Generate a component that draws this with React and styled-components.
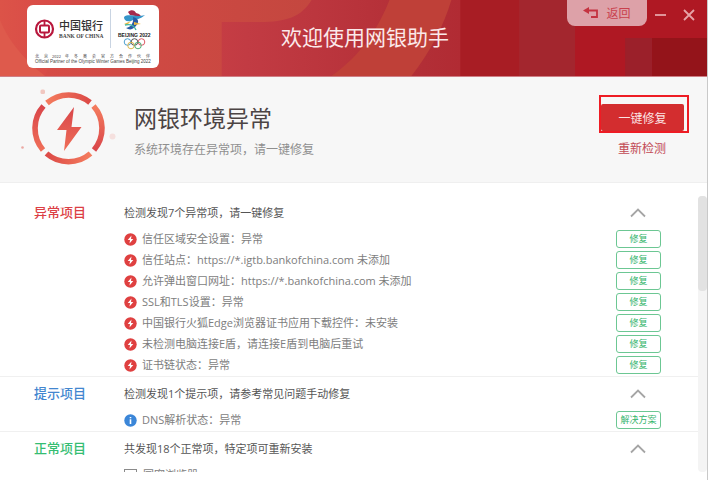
import React from "react";
import styled, { createGlobalStyle } from "styled-components";

const sans = `"Open Sans", "Noto Sans CJK SC", sans-serif`;

const GlobalStyle = createGlobalStyle`
  * { box-sizing: border-box; }
  body { margin: 0; background: #fff; font-family: ${sans}; }
  button { font-family: inherit; padding: 0; border: 0; background: none; cursor: pointer; }
  h1, h2, h3, p, ul { margin: 0; padding: 0; font-weight: 400; }
  ul { list-style: none; }
  svg { display: block; }
`;

const Window = styled.div`
  height: 100vh;
  display: flex;
  flex-direction: column;
  overflow: hidden;
  border-right: 1px solid #c9c9c9;
`;

const Header = styled.header`
  position: relative;
  flex: none;
  height: 77px;
  display: grid;
  grid-template-columns: 1fr auto 1fr;
  padding-left: 23px;
  color: #fff;
  border-bottom: 1px solid #cf7f86;
`;

const Backdrop = styled.svg`
  position: absolute;
  inset: 0;
  width: 100%;
  height: 100%;
`;

const LogoCard = styled.div`
  position: relative;
  align-self: start;
  justify-self: start;
  width: 132px;
  margin: 5px 0 0 4px;
  background: #fff;
  border-radius: 6px;
`;

const Title = styled.h1`
  position: relative;
  font-size: 21px;
  line-height: 30px;
  margin-top: 22px;
  color: #fbe9ea;
`;

const WindowControls = styled.div`
  position: relative;
  display: flex;
  align-items: flex-start;
  justify-content: flex-end;
  padding-right: 12px;
`;

const BackButton = styled.button`
  height: 26px;
  width: 80px;
  display: flex;
  align-items: center;
  justify-content: center;
  gap: 7px;
  color: #c9404c;
  background: #dda1a8;
  border-radius: 0 0 8px 8px;
  font-size: 12px;
`;

const IconButton = styled.button`
  width: 13px;
  height: 30px;
  display: grid;
  place-items: center;
  margin-left: ${(p) => (p.$first ? 7 : 15)}px;
`;

const Summary = styled.section`
  flex: none;
  height: 106px;
  display: flex;
  align-items: flex-start;
  background: #f7f7f7;
  border-bottom: 1px solid #efefef;
  padding: 0 18px 0 20px;
`;

const SummaryText = styled.div`
  flex: 1;
  padding: 25px 0 0 16px;
`;

const SummaryTitle = styled.h2`
  font-size: 23px;
  line-height: 32px;
  color: #4c4444;
`;

const SummaryNote = styled.p`
  font-size: 12px;
  line-height: 18px;
  margin-top: 7px;
  color: #8f8f8f;
`;

const SummaryActions = styled.div`
  display: flex;
  flex-direction: column;
  align-items: center;
  padding-top: 18px;
  gap: 7px;
`;

const Highlight = styled.div`
  width: 90px;
  height: 38px;
  border: 2px solid #ee1c24;
  padding: 7px 3px 0 0;
`;

const RepairAllButton = styled.button`
  width: 100%;
  height: 100%;
  background: #d32d2f;
  color: #fbe3e3;
  font-size: 12px;
  border-radius: 2px;
`;

const RecheckButton = styled.button`
  width: 100%;
  padding-right: 4px;
  font-size: 12px;
  line-height: 18px;
  color: #c24a55;
`;

const Results = styled.main`
  flex: 1;
  min-height: 0;
  display: flex;
  margin-bottom: 8px;
  padding-top: 13px;
`;

const Groups = styled.div`
  flex: 1;
  min-width: 0;
  overflow: hidden;
`;

const ScrollTrack = styled.div`
  width: 9px;
  background: #f4f4f4;
  border-radius: 4px;
`;

const ScrollThumb = styled.div`
  height: 95px;
  background: #e2e2e2;
  border-radius: 4px;
`;

const Group = styled.section`
  display: grid;
  grid-template-columns: 90px 1fr;
  padding: ${(p) => (p.$first ? 6 : 7)}px 37px 0 34px;
  border-top: 1px solid ${(p) => (p.$first ? "transparent" : "#f0f0f0")};
`;

const GroupName = styled.h3`
  font-size: 13px;
  line-height: 18px;
  font-weight: 500;
  color: ${(p) => p.$color};
`;

const GroupHead = styled.div`
  display: flex;
  align-items: center;
  justify-content: space-between;
  height: 20px;
`;

const GroupSummary = styled.p`
  font-size: 11px;
  line-height: 18px;
  color: #555;
`;

const Toggle = styled.button`
  width: 46px;
  height: 18px;
  display: grid;
  place-items: center;
`;

const Items = styled.ul`
  display: grid;
  gap: 3px;
  padding: 7px 0 2px;
`;

const Item = styled.li`
  display: flex;
  align-items: center;
  height: 18px;
  font-size: 11px;
  line-height: 18px;
  color: #7d7d7d;
  white-space: nowrap;
`;

const ItemText = styled.span`
  flex: 1;
  padding-left: 5px;
`;

const ActionButton = styled.button`
  width: 45px;
  height: 18px;
  border: 1px solid #6cc793;
  border-radius: 3px;
  color: #35b56c;
  font-size: 9px;
  line-height: 14px;
`;

const CheckLabel = styled.label`
  display: flex;
  align-items: center;
  gap: 6px;
`;

const Check = styled.input`
  appearance: none;
  width: 13px;
  height: 13px;
  margin: 0;
  border: 1px solid #8a8a8a;
`;

function HeaderBackdrop() {
  return (
    <Backdrop viewBox="0 0 708 76" preserveAspectRatio="none" aria-hidden="true">
      <defs>
        <linearGradient id="base">
          <stop offset="0" stopColor="#dc5348" />
          <stop offset=".12" stopColor="#d64647" />
          <stop offset=".35" stopColor="#c23b43" />
          <stop offset=".6" stopColor="#b22e36" />
          <stop offset="1" stopColor="#aa171f" />
        </linearGradient>
        <linearGradient id="arc">
          <stop offset="0" stopColor="#d64b46" />
          <stop offset="1" stopColor="#c4473f" />
        </linearGradient>
      </defs>
      <rect width="708" height="76" fill="url(#base)" />
      <path d="M0 20Q12 50 45 76H0Z" fill="#de5a4c" />
      <path d="M72 0H312C302 17 286 22 260 22H222V76H45Z" fill="url(#arc)" />
      <path d="M390 0H452Q440 40 412 76H332C362 55 379 28 390 0Z" fill="#bf4038" />
      <path d="M461 0H520V76H461Z" fill="#a81d24" />
      <path d="M520 0H576V76H520Z" fill="#a3262e" />
      <path d="M576 0H708V76H576Z" fill="#af1823" />
      <path d="M626 38H653V76H626Z" fill="#9b202a" />
      <path d="M653 38H708V76H653Z" fill="#94141a" />
    </Backdrop>
  );
}

function PartnerLogo() {
  return (
    <svg width="132" height="63" viewBox="0 0 132 63" role="img" aria-label="中国银行 BANK OF CHINA">
      <circle cx="17.500" cy="24" r="8.500" fill="none" stroke="#b8173c" strokeWidth="2.200" />
      <rect x="13" y="20.500" width="9" height="7" rx="1" fill="none" stroke="#b8173c" strokeWidth="2" />
      <path d="M17.500 15V20M17.500 28V33" stroke="#b8173c" strokeWidth="1.800" />
      <text x="32" y="25" fontFamily="Noto Sans CJK SC" fontWeight="500" fontSize="11" fill="#333">中国银行</text>
      <text x="32" y="33" fontFamily="Liberation Serif" fontWeight="700" fontSize="5.500" fill="#444">BANK OF CHINA</text>
      <path d="M83.500 4V43" stroke="#c9d4e2" />
      <path d="M101 7C104 4 108 5 109 8L112 9L115 12L108 11L103 10Z" fill="#a52a4c" />
      <path d="M97 12C102 8 108 13 118 10C113 15 108 14 104 16C99 17 97 15 97 12Z" fill="#3695c9" />
      <path d="M106 12C113 14 112 18 108 22C105 25 102 25 99 23C104 22 107 18 106 12Z" fill="#285ba5" />
      <path d="M97 19L104 16L100 20ZM107 17L114 19L107 20Z" fill="#e8b941" />
      <path d="M98 20Q106 18 109 25" fill="none" stroke="#42b6a2" strokeWidth="1.300" />
      <text x="91" y="32" fontFamily="Liberation Sans" fontWeight="700" fontSize="5" fill="#222">BEIJING 2022</text>
      <g fill="none" strokeWidth="1">
        <circle cx="100.500" cy="37" r="3.300" stroke="#4d9fce" />
        <circle cx="107.500" cy="37" r="3.300" stroke="#555" />
        <circle cx="114.500" cy="37" r="3.300" stroke="#dc5964" />
        <circle cx="104" cy="40.500" r="3.300" stroke="#deb84b" />
        <circle cx="111" cy="40.500" r="3.300" stroke="#4eaf78" />
      </g>
      <g fill="#444" fontFamily="Noto Sans CJK SC" fontSize="4">
        {"北,京,2022,年,冬,奥,会,官,方,合,作,伙,伴".split(",").map((t, i) => (
          <text key={i} x={[8, 17, 25, 38, 47, 56, 65, 74, 83, 92, 101, 110, 119][i]} y="53">{t}</text>
        ))}
      </g>
      <text x="8" y="58" fontFamily="Liberation Sans" fontSize="4.500" fill="#444">Official Partner of the Olympic Winter Games Beijing 2022</text>
    </svg>
  );
}

function AlertEmblem() {
  return (
    <svg width="98" height="105" viewBox="20 77 98 105" aria-hidden="true">
      <defs>
        <linearGradient id="warm"><stop stopColor="#f47c5e" /><stop offset="1" stopColor="#dc4a47" /></linearGradient>
        <linearGradient id="warmBack"><stop stopColor="#dc4a47" /><stop offset="1" stopColor="#f47c5e" /></linearGradient>
        <linearGradient id="down" x2="0" y2="1"><stop stopColor="#f47c5e" /><stop offset="1" stopColor="#d9464a" /></linearGradient>
        <linearGradient id="up" x2="0" y2="1"><stop stopColor="#d9464a" /><stop offset="1" stopColor="#ef6e58" /></linearGradient>
      </defs>
      <g fill="none" strokeWidth="5.600">
        <path d="M47 103A33.500 33.500 0 0 1 90 102.500" stroke="url(#warm)" />
        <path d="M93.500 106A33.500 33.500 0 0 1 94 150" stroke="url(#down)" />
        <path d="M90.500 153.500A33.500 33.500 0 0 1 46.500 153.500" stroke="url(#warmBack)" />
        <path d="M43 150A33.500 33.500 0 0 1 43.500 106" stroke="url(#up)" />
      </g>
      <path d="M74 107L57 130H66.500L64 151L81.500 127H71.500Z" fill="url(#up)" />
      <rect x="40.500" y="89.500" width="4.500" height="4.500" rx="1.500" fill="#f1c7c0" />
      <circle cx="112.500" cy="136.500" r="3" fill="#f5e0de" />
      <circle cx="22.500" cy="147.500" r="1.300" fill="#eba8a2" />
    </svg>
  );
}

function StatusIcon({ kind }) {
  return (
    <svg width="13" height="13" viewBox="0 0 13 13" aria-hidden="true">
      <circle cx="6.500" cy="6.500" r="6.200" fill={kind === "error" ? "#df4040" : "#3b86d8"} />
      {kind === "error" ? (
        <path d="M7.500 2.500L3.700 7H6L5.500 10.500L9.300 6H7Z" fill="#fff" />
      ) : (
        <path d="M6.500 3V4.300M6.500 5.300V10" stroke="#fff" strokeWidth="1.600" />
      )}
    </svg>
  );
}

function Chevron() {
  return (
    <svg width="16" height="10" viewBox="0 0 16 10" fill="none" stroke="#a5a5a5" strokeWidth="1.800" aria-hidden="true">
      <path d="M1 8.500L8 1.500L15 8.500" />
    </svg>
  );
}

const groups = [
  {
    name: "异常项目",
    color: "#dc3f45",
    summary: "检测发现7个异常项，请一键修复",
    kind: "error",
    action: "修复",
    items: [
      "信任区域安全设置：异常",
      "信任站点：https://*.igtb.bankofchina.com 未添加",
      "允许弹出窗口网址：https://*.bankofchina.com 未添加",
      "SSL和TLS设置：异常",
      "中国银行火狐Edge浏览器证书应用下载控件：未安装",
      "未检测电脑连接E盾，请连接E盾到电脑后重试",
      "证书链状态：异常",
    ],
  },
  {
    name: "提示项目",
    color: "#4286cf",
    summary: "检测发现1个提示项，请参考常见问题手动修复",
    kind: "info",
    action: "解决方案",
    items: ["DNS解析状态：异常"],
  },
  {
    name: "正常项目",
    color: "#35bd72",
    summary: "共发现18个正常项，特定项可重新安装",
    kind: "check",
    items: ["国密浏览器"],
  },
];

export default function App() {
  return (
    <Window>
      <GlobalStyle />
      <Header>
        <HeaderBackdrop />
        <LogoCard><PartnerLogo /></LogoCard>
        <Title>欢迎使用网银助手</Title>
        <WindowControls>
          <BackButton>
            <svg width="16" height="12" viewBox="0 0 16 12" aria-hidden="true">
              <path d="M4 3.500H14V10H8" fill="none" stroke="#c43340" strokeWidth="1.800" />
              <path d="M0 3.500L6 0V7Z" fill="#c43340" />
            </svg>
            返回
          </BackButton>
          <IconButton $first aria-label="最小化">
            <svg width="11" height="12" viewBox="0 0 11 12" stroke="#e6a3a8" strokeWidth="1.800"><path d="M0 6H11" /></svg>
          </IconButton>
          <IconButton aria-label="关闭">
            <svg width="12" height="12" viewBox="0 0 12 12" stroke="#e6a3a8" strokeWidth="1.800"><path d="M1 1L11 11M11 1L1 11" /></svg>
          </IconButton>
        </WindowControls>
      </Header>
      <Summary>
        <AlertEmblem />
        <SummaryText>
          <SummaryTitle>网银环境异常</SummaryTitle>
          <SummaryNote>系统环境存在异常项，请一键修复</SummaryNote>
        </SummaryText>
        <SummaryActions>
          <Highlight><RepairAllButton>一键修复</RepairAllButton></Highlight>
          <RecheckButton>重新检测</RecheckButton>
        </SummaryActions>
      </Summary>
      <Results>
        <Groups>
          {groups.map((g, gi) => (
            <Group key={g.name} $first={gi === 0}>
              <GroupName $color={g.color}>{g.name}</GroupName>
              <div>
                <GroupHead>
                  <GroupSummary>{g.summary}</GroupSummary>
                  <Toggle aria-label={`收起${g.name}`}><Chevron /></Toggle>
                </GroupHead>
                <Items>
                  {g.items.map((text) => (
                    <Item key={text}>
                      {g.kind === "check" ? (
                        <CheckLabel><Check type="checkbox" />{text}</CheckLabel>
                      ) : (
                        <>
                          <StatusIcon kind={g.kind} />
                          <ItemText>{text}</ItemText>
                          <ActionButton>{g.action}</ActionButton>
                        </>
                      )}
                    </Item>
                  ))}
                </Items>
              </div>
            </Group>
          ))}
        </Groups>
        <ScrollTrack><ScrollThumb /></ScrollTrack>
      </Results>
    </Window>
  );
}
